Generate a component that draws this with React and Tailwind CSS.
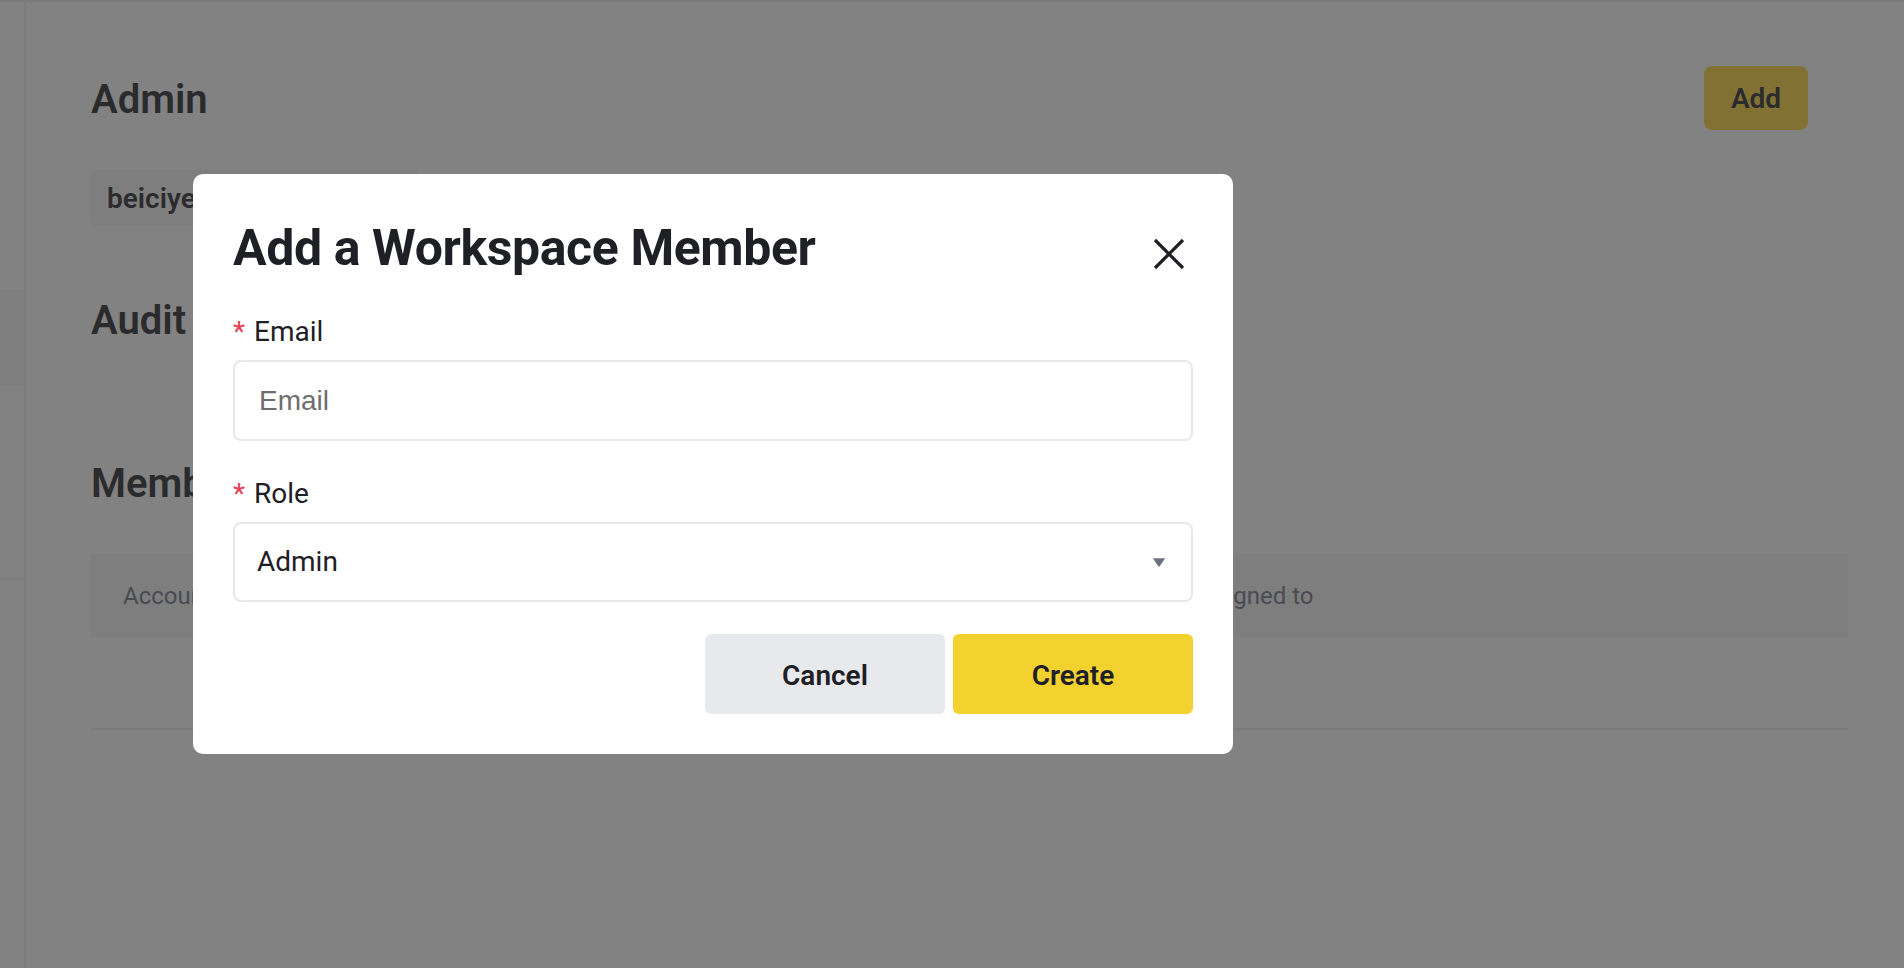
import React from 'react';

const font = { fontFamily: 'Roboto, "Noto Sans", sans-serif' };

const Page = () => {
  return (
    <div className="absolute inset-0 flex flex-col bg-white text-[#1e2026]">
      <div className="h-[2px] bg-[#eaecef]" />
      <div className="flex flex-1">
        {/* collapsed sidebar */}
        <aside className="w-[26px] shrink-0 border-r-2 border-[#eaecef] flex flex-col">
          <div className="h-[288px]" />
          <div className="h-[96px] bg-[#f5f5f5]" />
          <div className="h-[192px]" />
          <div className="h-[2px] bg-[#eaecef]" />
        </aside>

        <main className="flex-1 pl-[65px] pr-[56px] pt-[64px]">
          <div className="flex items-center justify-between h-[64px] pr-[40px]">
            <h2 className="mt-[4px] text-[40px] leading-[48px] font-semibold">Admin</h2>
            <button className="h-[64px] w-[104px] rounded-[8px] bg-[#fcd535] pt-[2px] text-[28px] font-semibold">
              Add
            </button>
          </div>

          <div className="mt-[40px] flex gap-4">
            <div className="h-[56px] rounded-[6px] bg-[#f5f5f5] px-[16px] pt-[2px] flex items-center text-[28px] font-semibold">
              beiciyeh@workspace.io
            </div>
          </div>

          <h2 className="mt-[71px] text-[40px] leading-[48px] font-semibold">Audit Log</h2>

          <h2 className="mt-[115px] text-[40px] leading-[48px] font-semibold">Members</h2>

          <div className="mt-[46px]">
            <div className="h-[83px] bg-[#f5f5f5] grid grid-cols-[560px_504px_1fr] items-center pl-[32px] text-[24px] text-[#6b7383]">
              <span>Account</span>
              <span>Role</span>
              <span>Assigned to</span>
            </div>
            <div className="h-[93px] border-b-2 border-[#eaecef]" />
          </div>
        </main>
      </div>
    </div>
  );
};

const Field = ({ label, children }) => (
  <div>
    <label className="flex items-start text-[28px] leading-[40px] text-[#1e2026]">
      <span className="text-[#e83d55] mr-[9px]">*</span>
      {label}
    </label>
    <div className="mt-[8px]">{children}</div>
  </div>
);

const AddMemberModal = () => {
  return (
    <div className="absolute left-[193px] top-[174px] w-[1040px] rounded-[10px] bg-white px-[40px] pt-[44px] pb-[40px]">
      <div className="flex items-start justify-between">
        <h1 className="text-[50px] leading-[60px] font-bold tracking-[-0.4px] text-[#1e2026]">
          Add a Workspace Member
        </h1>
        <button className="mt-[20px] mr-[8px]">
          <svg width="32" height="32" viewBox="0 0 32 32" fill="none">
            <path d="M2 2L30 30M30 2L2 30" stroke="#1e2026" strokeWidth="3.2" />
          </svg>
        </button>
      </div>

      <div className="mt-[34px]">
        <Field label="Email">
          <input
            placeholder="Email"
            className="w-full h-[81px] rounded-[8px] border-2 border-[#e6e8ec] px-[24px] text-[28px] outline-none placeholder:text-[#6e6e6e]"
            style={{ fontFamily: '"Liberation Sans", Arial, sans-serif' }}
          />
        </Field>
      </div>

      <div className="mt-[33px]">
        <Field label="Role">
          <div className="w-full h-[80px] rounded-[8px] border-2 border-[#e6e8ec] pl-[22px] pr-[25px] flex items-center justify-between text-[28px] text-[#1e2026]">
            <span>Admin</span>
            <svg width="14" height="11" viewBox="0 0 14 11">
              <path d="M0.8 1.2h12.4L7.9 8.9a1.1 1.1 0 0 1-1.8 0Z" fill="#6b7180" />
            </svg>
          </div>
        </Field>
      </div>

      <div className="mt-[32px] flex justify-end gap-[8px]">
        <button className="w-[240px] h-[80px] rounded-[6px] bg-[#e8e9ed] pt-[3px] text-[28px] font-semibold text-[#1e2026]">
          Cancel
        </button>
        <button className="w-[240px] h-[80px] rounded-[6px] bg-[#f3d230] pt-[3px] text-[28px] font-semibold text-[#1e2026]">
          Create
        </button>
      </div>
    </div>
  );
};

export default function App() {
  return (
    <div className="relative h-[968px] w-full overflow-hidden bg-white" style={font}>
      <Page />
      <div className="absolute inset-0 bg-[rgba(51,51,51,0.61)]" />
      <AddMemberModal />
    </div>
  );
}
